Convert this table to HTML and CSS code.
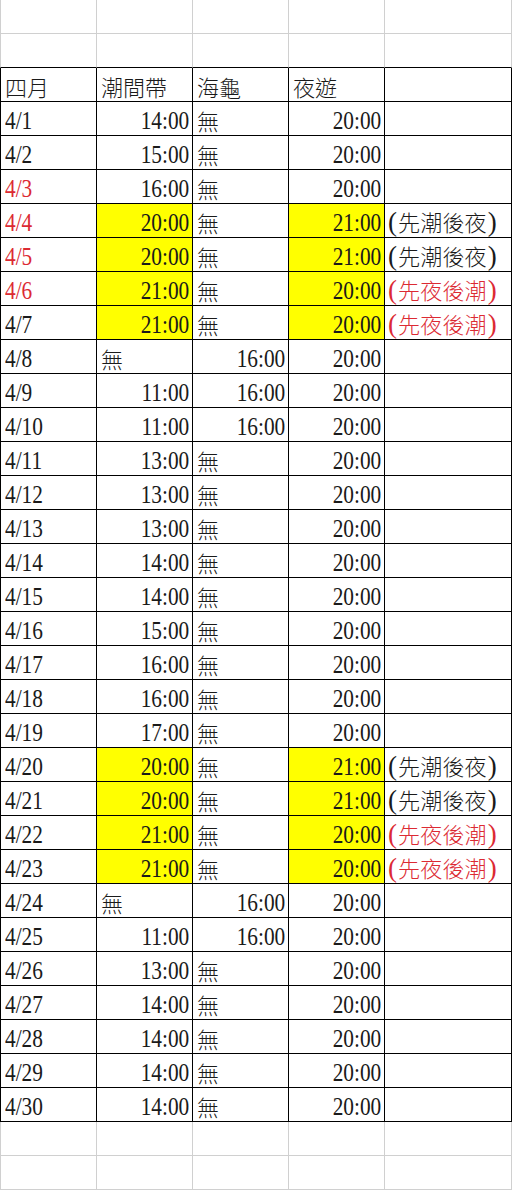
FILE: index.html
```html
<!DOCTYPE html>
<html lang="zh-Hant">
<head>
<meta charset="utf-8">
<title>四月</title>
<link rel="stylesheet" href="styles.css">
</head>
<body>
<div class="sheet">
  <div class="row gray"><div class="cell"></div><div class="cell"></div><div class="cell"></div><div class="cell"></div><div class="cell"></div></div>
  <div class="row gray last-gray"><div class="cell"></div><div class="cell"></div><div class="cell"></div><div class="cell"></div><div class="cell"></div></div>

  <div class="row"><div class="cell"><span class="c">四月</span></div><div class="cell"><span class="c">潮間帶</span></div><div class="cell"><span class="c">海龜</span></div><div class="cell"><span class="c">夜遊</span></div><div class="cell"></div></div>

  <div class="row"><div class="cell"><span class="t l">4/1</span></div><div class="cell r"><span class="t">14:00</span></div><div class="cell"><span class="c">無</span></div><div class="cell r"><span class="t">20:00</span></div><div class="cell"></div></div>
  <div class="row"><div class="cell"><span class="t l">4/2</span></div><div class="cell r"><span class="t">15:00</span></div><div class="cell"><span class="c">無</span></div><div class="cell r"><span class="t">20:00</span></div><div class="cell"></div></div>
  <div class="row"><div class="cell red"><span class="t l">4/3</span></div><div class="cell r"><span class="t">16:00</span></div><div class="cell"><span class="c">無</span></div><div class="cell r"><span class="t">20:00</span></div><div class="cell"></div></div>
  <div class="row"><div class="cell red"><span class="t l">4/4</span></div><div class="cell r hl"><span class="t">20:00</span></div><div class="cell"><span class="c">無</span></div><div class="cell r hl"><span class="t">21:00</span></div><div class="cell note"><span class="p">(</span><span class="c">先潮後夜</span><span class="p">)</span></div></div>
  <div class="row"><div class="cell red"><span class="t l">4/5</span></div><div class="cell r hl"><span class="t">20:00</span></div><div class="cell"><span class="c">無</span></div><div class="cell r hl"><span class="t">21:00</span></div><div class="cell note"><span class="p">(</span><span class="c">先潮後夜</span><span class="p">)</span></div></div>
  <div class="row"><div class="cell red"><span class="t l">4/6</span></div><div class="cell r hl"><span class="t">21:00</span></div><div class="cell"><span class="c">無</span></div><div class="cell r hl"><span class="t">20:00</span></div><div class="cell note red"><span class="p">(</span><span class="c">先夜後潮</span><span class="p">)</span></div></div>
  <div class="row"><div class="cell"><span class="t l">4/7</span></div><div class="cell r hl"><span class="t">21:00</span></div><div class="cell"><span class="c">無</span></div><div class="cell r hl"><span class="t">20:00</span></div><div class="cell note red"><span class="p">(</span><span class="c">先夜後潮</span><span class="p">)</span></div></div>
  <div class="row"><div class="cell"><span class="t l">4/8</span></div><div class="cell"><span class="c">無</span></div><div class="cell r"><span class="t">16:00</span></div><div class="cell r"><span class="t">20:00</span></div><div class="cell"></div></div>
  <div class="row"><div class="cell"><span class="t l">4/9</span></div><div class="cell r"><span class="t">11:00</span></div><div class="cell r"><span class="t">16:00</span></div><div class="cell r"><span class="t">20:00</span></div><div class="cell"></div></div>
  <div class="row"><div class="cell"><span class="t l">4/10</span></div><div class="cell r"><span class="t">11:00</span></div><div class="cell r"><span class="t">16:00</span></div><div class="cell r"><span class="t">20:00</span></div><div class="cell"></div></div>
  <div class="row"><div class="cell"><span class="t l">4/11</span></div><div class="cell r"><span class="t">13:00</span></div><div class="cell"><span class="c">無</span></div><div class="cell r"><span class="t">20:00</span></div><div class="cell"></div></div>
  <div class="row"><div class="cell"><span class="t l">4/12</span></div><div class="cell r"><span class="t">13:00</span></div><div class="cell"><span class="c">無</span></div><div class="cell r"><span class="t">20:00</span></div><div class="cell"></div></div>
  <div class="row"><div class="cell"><span class="t l">4/13</span></div><div class="cell r"><span class="t">13:00</span></div><div class="cell"><span class="c">無</span></div><div class="cell r"><span class="t">20:00</span></div><div class="cell"></div></div>
  <div class="row"><div class="cell"><span class="t l">4/14</span></div><div class="cell r"><span class="t">14:00</span></div><div class="cell"><span class="c">無</span></div><div class="cell r"><span class="t">20:00</span></div><div class="cell"></div></div>
  <div class="row"><div class="cell"><span class="t l">4/15</span></div><div class="cell r"><span class="t">14:00</span></div><div class="cell"><span class="c">無</span></div><div class="cell r"><span class="t">20:00</span></div><div class="cell"></div></div>
  <div class="row"><div class="cell"><span class="t l">4/16</span></div><div class="cell r"><span class="t">15:00</span></div><div class="cell"><span class="c">無</span></div><div class="cell r"><span class="t">20:00</span></div><div class="cell"></div></div>
  <div class="row"><div class="cell"><span class="t l">4/17</span></div><div class="cell r"><span class="t">16:00</span></div><div class="cell"><span class="c">無</span></div><div class="cell r"><span class="t">20:00</span></div><div class="cell"></div></div>
  <div class="row"><div class="cell"><span class="t l">4/18</span></div><div class="cell r"><span class="t">16:00</span></div><div class="cell"><span class="c">無</span></div><div class="cell r"><span class="t">20:00</span></div><div class="cell"></div></div>
  <div class="row"><div class="cell"><span class="t l">4/19</span></div><div class="cell r"><span class="t">17:00</span></div><div class="cell"><span class="c">無</span></div><div class="cell r"><span class="t">20:00</span></div><div class="cell"></div></div>
  <div class="row"><div class="cell"><span class="t l">4/20</span></div><div class="cell r hl"><span class="t">20:00</span></div><div class="cell"><span class="c">無</span></div><div class="cell r hl"><span class="t">21:00</span></div><div class="cell note"><span class="p">(</span><span class="c">先潮後夜</span><span class="p">)</span></div></div>
  <div class="row"><div class="cell"><span class="t l">4/21</span></div><div class="cell r hl"><span class="t">20:00</span></div><div class="cell"><span class="c">無</span></div><div class="cell r hl"><span class="t">21:00</span></div><div class="cell note"><span class="p">(</span><span class="c">先潮後夜</span><span class="p">)</span></div></div>
  <div class="row"><div class="cell"><span class="t l">4/22</span></div><div class="cell r hl"><span class="t">21:00</span></div><div class="cell"><span class="c">無</span></div><div class="cell r hl"><span class="t">20:00</span></div><div class="cell note red"><span class="p">(</span><span class="c">先夜後潮</span><span class="p">)</span></div></div>
  <div class="row"><div class="cell"><span class="t l">4/23</span></div><div class="cell r hl"><span class="t">21:00</span></div><div class="cell"><span class="c">無</span></div><div class="cell r hl"><span class="t">20:00</span></div><div class="cell note red"><span class="p">(</span><span class="c">先夜後潮</span><span class="p">)</span></div></div>
  <div class="row"><div class="cell"><span class="t l">4/24</span></div><div class="cell"><span class="c">無</span></div><div class="cell r"><span class="t">16:00</span></div><div class="cell r"><span class="t">20:00</span></div><div class="cell"></div></div>
  <div class="row"><div class="cell"><span class="t l">4/25</span></div><div class="cell r"><span class="t">11:00</span></div><div class="cell r"><span class="t">16:00</span></div><div class="cell r"><span class="t">20:00</span></div><div class="cell"></div></div>
  <div class="row"><div class="cell"><span class="t l">4/26</span></div><div class="cell r"><span class="t">13:00</span></div><div class="cell"><span class="c">無</span></div><div class="cell r"><span class="t">20:00</span></div><div class="cell"></div></div>
  <div class="row"><div class="cell"><span class="t l">4/27</span></div><div class="cell r"><span class="t">14:00</span></div><div class="cell"><span class="c">無</span></div><div class="cell r"><span class="t">20:00</span></div><div class="cell"></div></div>
  <div class="row"><div class="cell"><span class="t l">4/28</span></div><div class="cell r"><span class="t">14:00</span></div><div class="cell"><span class="c">無</span></div><div class="cell r"><span class="t">20:00</span></div><div class="cell"></div></div>
  <div class="row"><div class="cell"><span class="t l">4/29</span></div><div class="cell r"><span class="t">14:00</span></div><div class="cell"><span class="c">無</span></div><div class="cell r"><span class="t">20:00</span></div><div class="cell"></div></div>
  <div class="row"><div class="cell"><span class="t l">4/30</span></div><div class="cell r"><span class="t">14:00</span></div><div class="cell"><span class="c">無</span></div><div class="cell r"><span class="t">20:00</span></div><div class="cell"></div></div>

  <div class="row gray"><div class="cell"></div><div class="cell"></div><div class="cell"></div><div class="cell"></div><div class="cell"></div></div>
  <div class="row gray"><div class="cell"></div><div class="cell"></div><div class="cell"></div><div class="cell"></div><div class="cell"></div></div>
</div>
</body>
</html>
```

FILE: styles.css
```css
html, body {
  margin: 0;
  padding: 0;
  background: #ffffff;
}

body {
  width: 512px;
  height: 1191px;
  overflow: hidden;
  color: #1a1a1a;
  font-family: "Liberation Serif", "Noto Sans CJK TC", serif;
}

.sheet {
  display: flex;
  flex-direction: column;
}

.row {
  display: grid;
  grid-template-columns: 97px 96px 96px 96px 127px;
  height: 34px;
}

.cell {
  box-sizing: border-box;
  height: 34px;
  border-right: 1px solid #000;
  border-bottom: 1px solid #000;
  display: flex;
  align-items: flex-end;
  justify-content: flex-start;
  padding: 0 3px 0 4px;
  white-space: nowrap;
  overflow: visible;
  min-width: 0;
}

.cell:first-child {
  border-left: 1px solid #000;
}

.row.gray .cell {
  border-color: #d0d0d0;
}

.row.gray.last-gray .cell {
  border-bottom-color: #000;
}

.cell.r {
  justify-content: flex-end;
}

.cell.hl {
  background: #ffff00;
}

.cell.red {
  color: #dc2a33;
}

.t {
  display: inline-block;
  font-family: "Liberation Serif", serif;
  font-size: 26px;
  line-height: 1;
  margin-bottom: 1px;
  transform: scaleX(0.82);
  transform-origin: right bottom;
}

.t.l {
  transform-origin: left bottom;
}

.c {
  display: inline-block;
  font-family: "Noto Sans CJK TC", sans-serif;
  font-weight: 300;
  font-size: 22px;
  line-height: 1;
  margin-bottom: 4px;
}

.cell.note {
  padding-left: 2px;
  align-items: baseline;
  padding-top: 5px;
}

.cell.note .c {
  margin-bottom: 0;
  letter-spacing: 0.2px;
}

.p {
  display: inline-block;
  font-family: "Liberation Serif", serif;
  font-size: 27px;
  line-height: 1;
  margin: 0 1px;
}
```
